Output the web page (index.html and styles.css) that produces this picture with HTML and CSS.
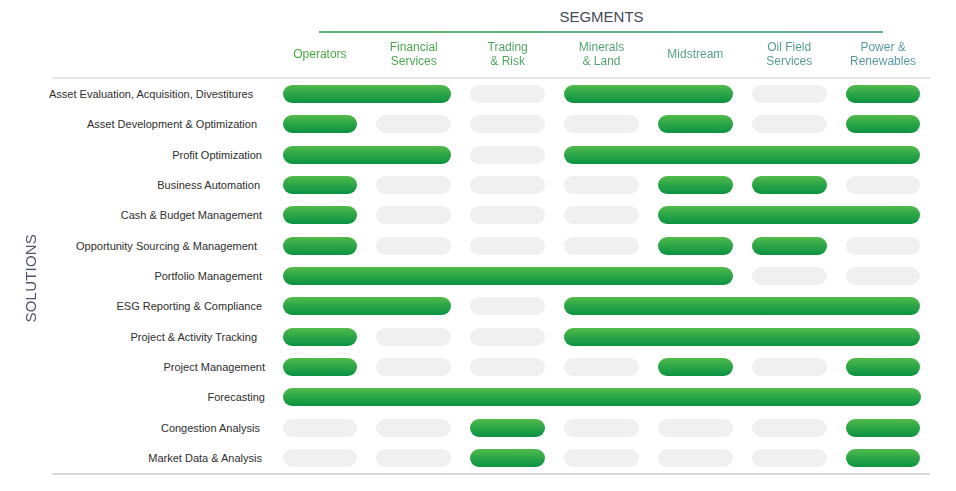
FILE: index.html
```html
<!DOCTYPE html>
<html>
<head>
<meta charset="utf-8">
<link rel="stylesheet" href="styles.css">
</head>
<body>
<div class="chart">
  <div class="head">
    <div class="seg-title">SEGMENTS</div>
    <div class="seg-rule"></div>
    <div class="cols">
      <div class="col">Operators</div>
      <div class="col">Financial<br>Services</div>
      <div class="col">Trading<br>&amp; Risk</div>
      <div class="col">Minerals<br>&amp; Land</div>
      <div class="col">Midstream</div>
      <div class="col">Oil Field<br>Services</div>
      <div class="col">Power &amp;<br>Renewables</div>
    </div>
  </div>
  <div class="body">
    <div class="side"><span class="side-text">SOLUTIONS</span></div>
    <div class="rows">
      <div class="row">
        <div class="label l-a">Asset Evaluation, Acquisition, Divestitures</div>
        <div class="bar on span2"></div><div class="bar"></div><div class="bar on span2"></div><div class="bar"></div><div class="bar on"></div>
      </div>
      <div class="row">
        <div class="label l-b">Asset Development &amp; Optimization</div>
        <div class="bar on"></div><div class="bar"></div><div class="bar"></div><div class="bar"></div><div class="bar on"></div><div class="bar"></div><div class="bar on"></div>
      </div>
      <div class="row">
        <div class="label">Profit Optimization</div>
        <div class="bar on span2"></div><div class="bar"></div><div class="bar on span4"></div>
      </div>
      <div class="row">
        <div class="label l-d">Business Automation</div>
        <div class="bar on"></div><div class="bar"></div><div class="bar"></div><div class="bar"></div><div class="bar on"></div><div class="bar on"></div><div class="bar"></div>
      </div>
      <div class="row">
        <div class="label">Cash &amp; Budget Management</div>
        <div class="bar on"></div><div class="bar"></div><div class="bar"></div><div class="bar"></div><div class="bar on span3"></div>
      </div>
      <div class="row">
        <div class="label l-b">Opportunity Sourcing &amp; Management</div>
        <div class="bar on"></div><div class="bar"></div><div class="bar"></div><div class="bar"></div><div class="bar on"></div><div class="bar on"></div><div class="bar"></div>
      </div>
      <div class="row">
        <div class="label">Portfolio Management</div>
        <div class="bar on span5"></div><div class="bar"></div><div class="bar"></div>
      </div>
      <div class="row">
        <div class="label">ESG Reporting &amp; Compliance</div>
        <div class="bar on span2"></div><div class="bar"></div><div class="bar on span4"></div>
      </div>
      <div class="row">
        <div class="label l-b">Project &amp; Activity Tracking</div>
        <div class="bar on"></div><div class="bar"></div><div class="bar"></div><div class="bar on span4"></div>
      </div>
      <div class="row">
        <div class="label l-c">Project Management</div>
        <div class="bar on"></div><div class="bar"></div><div class="bar"></div><div class="bar"></div><div class="bar on"></div><div class="bar"></div><div class="bar on"></div>
      </div>
      <div class="row">
        <div class="label l-c">Forecasting</div>
        <div class="bar on span7"></div>
      </div>
      <div class="row">
        <div class="label l-d">Congestion Analysis</div>
        <div class="bar"></div><div class="bar"></div><div class="bar on"></div><div class="bar"></div><div class="bar"></div><div class="bar"></div><div class="bar on"></div>
      </div>
      <div class="row">
        <div class="label">Market Data &amp; Analysis</div>
        <div class="bar"></div><div class="bar"></div><div class="bar on"></div><div class="bar"></div><div class="bar"></div><div class="bar"></div><div class="bar on"></div>
      </div>
    </div>
  </div>
</div>
</body>
</html>
```

FILE: styles.css
```css
html, body {
  margin: 0;
  padding: 0;
  background: #ffffff;
}

body {
  font-family: "Liberation Sans", Arial, sans-serif;
  width: 956px;
  height: 491px;
  overflow: hidden;
}

.chart {
  width: 956px;
}

.head {
  margin-left: 273px;
  width: 657px;
}

.seg-title {
  height: 31px;
  line-height: 34px;
  text-align: center;
  font-size: 15px;
  color: #444b59;
}

.seg-rule {
  height: 2px;
  margin: 0 47px 0 46px;
  background: linear-gradient(90deg, #5cb76e, #6aa7a3);
}

.cols {
  display: grid;
  grid-template-columns: repeat(7, 1fr);
  height: 44px;
  align-items: center;
  box-sizing: border-box;
  background: linear-gradient(90deg, #3fa533 0%, #48a458 35%, #4f9c80 65%, #5393a6 100%);
  -webkit-background-clip: text;
  background-clip: text;
  color: transparent;
}

.col {
  text-align: center;
  font-size: 12px;
  line-height: 14px;
  margin-top: -3px;
}

.body {
  display: flex;
}

.side {
  width: 52px;
  flex: none;
  display: flex;
  align-items: center;
  justify-content: center;
  padding-left: 9px;
  padding-top: 4px;
  box-sizing: border-box;
}

.side-text {
  writing-mode: vertical-rl;
  transform: rotate(180deg);
  font-size: 15px;
  letter-spacing: 0.2px;
  color: #4d5362;
}

.rows {
  width: 878px;
  border-top: 2px solid #e6e6e6;
  border-bottom: 2px solid #d8d8d8;
}

.row {
  display: grid;
  grid-template-columns: 221px repeat(7, 1fr);
  height: 30.33px;
  align-items: center;
}

.label {
  text-align: right;
  font-size: 11px;
  color: #2e2e2e;
  padding-right: 11px;
  white-space: nowrap;
}

.label.l-a { padding-right: 22px; margin-left: -3px; }
.label.l-b { padding-right: 16px; }
.label.l-c { padding-right: 8px; }
.label.l-d { padding-right: 13px; }

.bar {
  height: 18px;
  margin: 0 9.5px;
  border-radius: 9px;
  background: #f0f0f0;
}

.bar.on {
  background: linear-gradient(180deg, #52bb4a 0%, #2aa547 50%, #0c9243 100%);
}

.span2 { grid-column: span 2; }
.span3 { grid-column: span 3; }
.span4 { grid-column: span 4; }
.span5 { grid-column: span 5; }
.span7 { grid-column: span 7; }
```
